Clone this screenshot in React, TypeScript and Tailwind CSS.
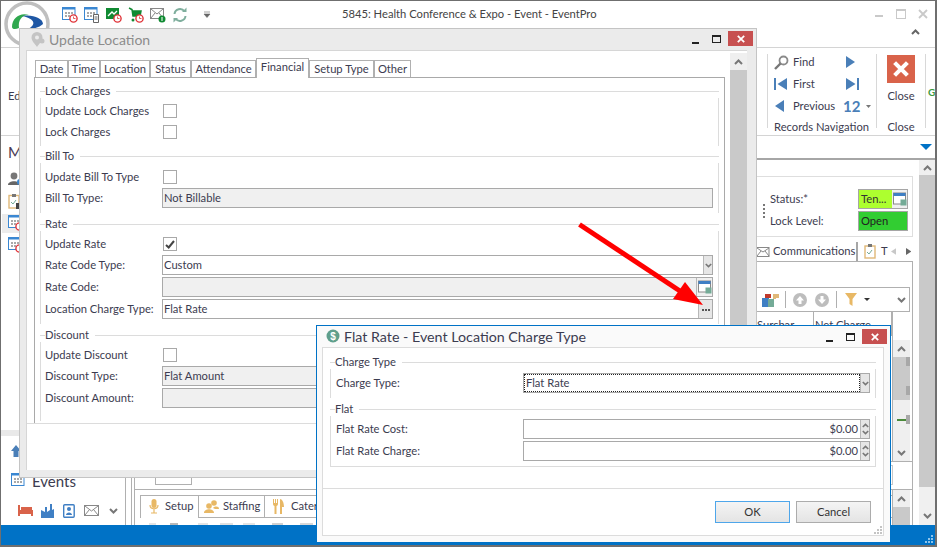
import React from "react";

const Chev = ({ up = false, c = "#777", w = 9, h = 6, sw = 2 }: { up?: boolean; c?: string; w?: number; h?: number; sw?: number }) => (
  <svg width={w} height={h} viewBox="0 0 9 6" className="shrink-0">
    <path d={up ? "M1 5L4.5 1.5L8 5" : "M1 1L4.5 4.5L8 1"} fill="none" stroke={c} strokeWidth={sw} />
  </svg>
);

const XIcon = ({ s = 9, sw = 2.4, c = "#fff" }: { s?: number; sw?: number; c?: string }) => (
  <svg width={s} height={s} viewBox="0 0 10 10" className="shrink-0">
    <path d="M1 1L9 9M9 1L1 9" stroke={c} strokeWidth={sw} />
  </svg>
);

const Clock = ({ x, y }: { x: number; y: number }) => (
  <g>
    <circle cx={x} cy={y} r="3.6" fill="#fff" stroke="#e0353a" strokeWidth="1.4" />
    <path d={`M${x} ${y - 2}V${y}H${x + 2}`} stroke="#e0353a" strokeWidth="0.8" fill="none" />
  </g>
);

const CalIcon = ({ clock = true, doc = false }: { clock?: boolean; doc?: boolean }) => (
  <svg width="16" height="16" viewBox="0 0 16 16" className="shrink-0">
    <rect x="0.5" y="0.5" width="12.5" height="12" fill="#fff" stroke="#3a87d2" />
    <rect x="0.5" y="0.5" width="12.5" height="2" fill="#3a87d2" />
    <path d="M3 5h2v2H3zM6 5h2v2H6zM9 5h2v2H9zM3 8h2v2H3zM6 8h2v2H6zM9 8h2v2H9z" fill="#a9a9a9" />
    {clock && <Clock x={11.5} y={11.5} />}
    {doc && <path d="M9.5 7.5h5v8h-5z M10.5 10h3M10.5 12h3" fill="#fff" stroke="#555" strokeWidth="0.9" />}
  </svg>
);

const QuickIcons = () => (
  <div className="flex items-start gap-[6px] ml-[11px] mt-[6px]">
    <CalIcon />
    <CalIcon clock={false} doc />
    <svg width="16" height="16" viewBox="0 0 16 16" className="shrink-0">
      <rect x="0" y="1" width="13" height="11" fill="#108a32" />
      <path d="M2 9L6 5L8 7L11 4" stroke="#fff" strokeWidth="1.3" fill="none" />
      <Clock x={11.5} y={11.5} />
    </svg>
    <svg width="16" height="16" viewBox="0 0 16 16" className="shrink-0">
      <path d="M1 1L4 2.5L5 9H12L13 4H4.5" stroke="#108a32" strokeWidth="1.5" fill="#108a32" />
      <circle cx="5" cy="13" r="1.5" fill="#108a32" />
      <Clock x={11.5} y={11.5} />
    </svg>
    <svg width="16" height="16" viewBox="0 0 16 16" className="shrink-0">
      <rect x="0.5" y="1.5" width="13" height="10" fill="#fff" stroke="#888" />
      <path d="M1 2L7 7L13 2M1 11L5 6M13 11L9 6" stroke="#888" fill="none" />
      <circle cx="12" cy="12" r="3.5" fill="#108a32" />
      <rect x="11.5" y="10" width="1" height="4" fill="#fff" />
    </svg>
    <svg width="16" height="16" viewBox="0 0 16 16" className="shrink-0">
      <path d="M2.5 7A5.5 5.5 0 0 1 12.5 4.5M13.5 9A5.5 5.5 0 0 1 3.5 11.5" stroke="#7fae9d" strokeWidth="2" fill="none" />
      <path d="M10 5H14.5V0.5zM6 11H1.5V15.5z" fill="#7fae9d" />
    </svg>
    <svg width="8" height="8" viewBox="0 0 8 8" className="ml-[9px] mt-[4px] shrink-0">
      <path d="M1 1H7M1 3H7L4 6.5Z" fill="#666" stroke="#666" strokeWidth="0.6" />
    </svg>
  </div>
);

const Logo = () => (
  <svg width="47" height="46" viewBox="0 0 47 46" className="ml-[3px] shrink-0">
    <circle cx="23" cy="23" r="21" fill="#fff" stroke="#bfbfbf" strokeWidth="3.5" />
    <path d="M8 26C8 16 17 11 25 14C17 14 14 20 15 27C11 29 8 28 8 26Z" fill="#2fa84f" />
    <path d="M18 15C28 13 39 17 39 23C35 27 28 28 24 28C32 24 32 18 18 15Z" fill="#1f57a4" />
  </svg>
);

const TriR = ({ c = "#4a7fb8", s = 12 }: { c?: string; s?: number }) => (
  <svg width={s * 0.75} height={s} viewBox="0 0 9 12" className="shrink-0"><path d="M0 0L9 6L0 12Z" fill={c} /></svg>
);
const TriL = ({ c = "#4a7fb8", s = 12 }: { c?: string; s?: number }) => (
  <svg width={s * 0.75} height={s} viewBox="0 0 9 12" className="shrink-0"><path d="M9 0L0 6L9 12Z" fill={c} /></svg>
);

const Pick = () => (
  <svg width="14" height="14" viewBox="0 0 14 14">
    <rect x="0.5" y="1" width="12" height="11" fill="#fff" stroke="#888" />
    <rect x="0.5" y="1" width="12" height="3" fill="#3f7fc4" />
    <rect x="7.5" y="7.5" width="6" height="6" fill="#74ab97" />
  </svg>
);

const Ribbon = () => (
  <div className="h-[88px] border-b border-[#d4d4d4] flex shrink-0">
    <div className="pl-[7px] pt-[40px] text-[#3c3c50]">Ed</div>
    <div className="ml-auto flex">
      <div className="mt-[6px] h-[74px] border-l border-[#d8d8d8]" />
      <div className="w-[108px] pl-[6px] pt-[3px] flex flex-col">
        <div className="grid grid-cols-[19px_50px_1fr] auto-rows-[22px] items-center">
          <svg width="15" height="15" viewBox="0 0 15 15">
            <circle cx="9.5" cy="5.5" r="4" fill="none" stroke="#8a8a8a" strokeWidth="1.8" />
            <path d="M6.5 8.5L1 14" stroke="#777" strokeWidth="2.4" />
          </svg>
          <span>Find</span>
          <div className="pl-[3px]"><TriR /></div>
          <svg width="13" height="12" viewBox="0 0 13 12"><rect x="0" y="0" width="2" height="12" fill="#4a7fb8" /><path d="M13 0L3.5 6L13 12Z" fill="#4a7fb8" /></svg>
          <span>First</span>
          <svg width="13" height="12" viewBox="0 0 13 12" className="ml-[3px]"><rect x="11" y="0" width="2" height="12" fill="#4a7fb8" /><path d="M0 0L9.5 6L0 12Z" fill="#4a7fb8" /></svg>
          <div className="pl-[1px]"><TriL /></div>
          <span>Previous</span>
          <div className="flex items-center gap-[6px]">
            <span className="text-[15px] font-bold text-[#4a7fb8]">12</span>
            <svg width="5" height="3" viewBox="0 0 5 3"><path d="M0 0H5L2.5 3Z" fill="#777" /></svg>
          </div>
        </div>
        <div className="mt-[2px] h-[16px] leading-[16px] whitespace-nowrap">Records Navigation</div>
      </div>
      <div className="mt-[6px] h-[74px] border-l border-[#d8d8d8]" />
      <div className="w-[48px] pt-[7px] flex flex-col items-center">
        <div className="size-[28px] bg-[#d9634a] flex items-center justify-center"><XIcon s={16} sw={2.6} /></div>
        <div className="mt-[6px] leading-[14px]">Close</div>
        <div className="mt-[17px] leading-[14px]">Close</div>
      </div>
      <div className="mt-[6px] h-[74px] border-l border-[#d8d8d8]" />
      <div className="w-[9px] overflow-hidden pl-[2px] pt-[37px] text-[#3d9a3d] font-bold text-[10px]">G</div>
    </div>
  </div>
);

const LeftNav = () => (
  <div className="w-[125px] shrink-0 border-r border-[#b0b0b0] flex flex-col">
    <div className="h-[32px] pl-[7px] flex items-center text-[15px] text-[#4a3a55]">My</div>
    <div className="pl-[7px] h-[22px] flex items-center">
      <svg width="14" height="14" viewBox="0 0 14 14"><circle cx="6" cy="4" r="3.4" fill="#777" /><path d="M0 13C0 8 12 8 12 13Z" fill="#666" /><circle cx="12" cy="10" r="3" fill="#3a87d2" /></svg>
    </div>
    <div className="pl-[7px] h-[22px] flex items-center">
      <svg width="14" height="15" viewBox="0 0 14 15"><rect x="1" y="1.5" width="10" height="12.5" fill="#fff" stroke="#e0b878" strokeWidth="1.4" /><rect x="4" y="0" width="4" height="3" fill="#777" /><path d="M3 8l2 2 3-4" stroke="#74ab97" fill="none" /><rect x="8" y="9" width="6" height="6" fill="#444" /></svg>
    </div>
    <div className="h-[22px] flex items-center">
      <div className="ml-[1px] pl-[6px] w-[18px] h-[19px] bg-[#ececec] flex items-center"><CalIcon /></div>
    </div>
    <div className="pl-[7px] h-[22px] flex items-center"><CalIcon /></div>
    <div className="mt-auto h-[6px] bg-[#e9e9e9]" />
    <div className="h-[30px] pl-[10px] flex items-center">
      <svg width="10" height="12" viewBox="0 0 10 12"><path d="M5 0L10 6H7.5V12H2.5V6H0Z" fill="#4a7fb8" /></svg>
    </div>
    <div className="h-[30px] pl-[10px] flex items-center gap-[5px] text-[15px] text-[#3c3c50]">
      <CalIcon clock={false} />
      <span>Events</span>
    </div>
    <div className="h-[29px] pl-[17px] flex items-center">
      <svg width="15" height="11" viewBox="0 0 15 11" className="mr-[8px]"><path d="M0 0H2V5H15V11H13V9H2V11H0Z" fill="#d9634a" /><rect x="3" y="2" width="11" height="3" fill="#d9634a" /></svg>
      <svg width="13" height="14" viewBox="0 0 13 14" className="mr-[9px]"><path d="M0 14V6L4 8V3H6V8L9 6V0H11V6L13 5V14Z" fill="#3f7fc4" /></svg>
      <svg width="13" height="14" viewBox="0 0 13 14" className="mr-[8px]"><rect x="0.7" y="0.7" width="10.5" height="12.5" rx="1" fill="#fff" stroke="#3f7fc4" strokeWidth="1.4" /><circle cx="6" cy="5" r="2" fill="#3f7fc4" /><path d="M3 11C3 7.5 9 7.5 9 11Z" fill="#3f7fc4" /></svg>
      <svg width="15" height="11" viewBox="0 0 15 11" className="mr-[10px]"><rect x="0.5" y="0.5" width="14" height="10" fill="#fff" stroke="#888" /><path d="M1 1L7.5 6L14 1M1 10L5.5 4.5M14 10L9.5 4.5" stroke="#888" fill="none" /></svg>
      <Chev />
    </div>
  </div>
);

const Tool = ({ w, c = "#d8d8d8", ml = 0 }: { w: number; c?: string; ml?: number }) => (
  <div style={{ width: w, marginLeft: ml, background: c }} className="h-[3px] shrink-0" />
);

const MainBackdrop = () => (
  <div className="flex-1 min-w-0 flex flex-col">
    <div className="h-[22px] flex justify-end items-center pr-[2px] shrink-0">
      <svg width="12" height="6" viewBox="0 0 12 6" className="mr-[1px]"><path d="M0 0H12L6 6Z" fill="#0072c6" /></svg>
    </div>
    <div className="h-[2px] bg-[#a6a6a6] shrink-0" />
    <div className="flex-1 min-h-0 flex">
      <div className="flex-1 min-w-0 ml-[5px] border-l border-[#b0b0b0] pl-[2px] flex flex-col">
        <div className="self-end mr-[6px] mt-[16px] w-[156px] h-[61px] border-y border-r border-[#dedede] pt-[12px] pl-[13px] shrink-0 relative">
          <div className="absolute left-[6px] top-[27px] flex flex-col gap-[2px]">
            {[0, 1, 2, 3].map((i) => <div key={i} className="size-[2px] bg-[#777]" />)}
          </div>
          <div className="flex h-[20px] items-center">
            <span className="w-[88px]">Status:*</span>
            <div className="w-[50px] h-[20px] border border-[#a6a6a6] flex">
              <div className="w-[33px] bg-[#adff2f] px-[2px] leading-[17px] text-[#333] whitespace-nowrap overflow-hidden">Ten...</div>
              <div className="flex-1 bg-[#f0f0f0] flex items-center justify-center"><Pick /></div>
            </div>
          </div>
          <div className="flex h-[20px] mt-[2px] items-center">
            <span className="w-[88px]">Lock Level:</span>
            <div className="w-[50px] h-[20px] border border-[#a6a6a6] bg-[#32cd32] px-[2px] leading-[17px] text-[#222]">Open</div>
          </div>
        </div>
        <div className="self-end mr-[6px] mt-[5px] w-[156px] h-[19px] flex items-center shrink-0">
          <svg width="13" height="10" viewBox="0 0 13 10" className="shrink-0"><rect x="-1" y="0.5" width="13" height="9" fill="#fff" stroke="#888" /><path d="M0 1L6 5L12 1M0 9L4 4M12 9L8 4" stroke="#888" fill="none" /></svg>
          <span className="ml-[3px] whitespace-nowrap w-[83px]">Communications</span>
          <div className="h-[19px] border-l-2 border-[#a6a6a6] shrink-0" />
          <svg width="13" height="15" viewBox="0 0 13 15" className="ml-[6px] shrink-0"><rect x="1" y="2" width="10" height="12" fill="#fff" stroke="#e0b878" strokeWidth="1.4" /><rect x="4" y="0" width="4" height="3" fill="#777" /><path d="M3 8l2 2 3-4" stroke="#74ab97" fill="none" /></svg>
          <span className="ml-[4px]">T</span>
          <div className="ml-[3px]"><TriL c="#c8c8c8" s={7} /></div>
          <div className="ml-[10px]"><TriR c="#666" s={7} /></div>
        </div>
        <div className="flex-1 min-h-0 mr-[6px] border-t border-x border-[#b0b0b0] flex flex-col">
          <div className="h-[25px] shrink-0" />
          <div className="h-[25px] mr-[2px] border border-[#b0b0b0] flex items-center justify-end shrink-0 pr-[3px]">
            <div className="h-[17px] border-l border-[#b0b0b0]" />
            <svg width="17" height="14" viewBox="0 0 17 14" className="ml-[6px]"><rect x="0" y="5" width="7" height="9" fill="#3f7fc4" /><rect x="6" y="6" width="6" height="8" fill="#74ab97" /><rect x="3" y="1" width="6" height="4" fill="#c0392b" /><path d="M11 1H17V5H14V6H11Z" fill="#e0b878" /></svg>
            <div className="h-[17px] border-l border-[#b0b0b0] ml-[6px]" />
            <svg width="14" height="14" viewBox="0 0 14 14" className="ml-[7px]"><circle cx="7" cy="7" r="7" fill="#bdbdbd" /><path d="M7 3L11 7.5H8.5V11H5.5V7.5H3Z" fill="#fff" /></svg>
            <svg width="14" height="14" viewBox="0 0 14 14" className="ml-[8px]"><circle cx="7" cy="7" r="7" fill="#bdbdbd" /><path d="M7 11L11 6.5H8.5V3H5.5V6.5H3Z" fill="#fff" /></svg>
            <div className="h-[17px] border-l border-[#b0b0b0] ml-[7px]" />
            <svg width="12" height="13" viewBox="0 0 12 13" className="ml-[8px]"><path d="M0 0H12L7.5 6V13L4.5 11V6Z" fill="#e8b865" /></svg>
            <svg width="6" height="3" viewBox="0 0 6 3" className="ml-[7px]"><path d="M0 0H6L3 3Z" fill="#333" /></svg>
            <div className="ml-[27px]"><Chev /></div>
          </div>
          <div className="h-[149px] shrink-0 flex mr-[2px]">
            <div className="flex-1 min-w-0 flex justify-end">
              <div className="w-[58px] h-[24px] border-r border-[#b0b0b0] pl-[1px] pt-[6px] leading-[14px] whitespace-nowrap">Surchar</div>
              <div className="w-[78px] h-[24px] border-r border-[#b0b0b0] pl-[1px] pt-[6px] leading-[14px] whitespace-nowrap">Net Charge</div>
            </div>
            <div className="w-[18px] shrink-0 flex flex-col border-l border-[#b0b0b0]">
              <div className="h-[28px] bg-white" />
              <div className="h-[17px] bg-[#efefef] flex items-center justify-center"><Chev up /></div>
              <div className="h-[43px] bg-[#c9c9c9] flex flex-col items-end">
                <div className="w-[4px] h-[9px] bg-[#a8a8a8]" />
                <div className="w-[4px] h-[9px] bg-[#a8a8a8] mt-[20px]" />
              </div>
              <div className="flex-1 bg-[#efefef] flex flex-col">
                <div className="mt-[15px] flex items-center justify-end">
                  <div className="w-[9px] h-[1px] border-t-2 border-[#4a8a3a]" />
                  <div className="w-[4px] h-[9px] bg-[#a8a8a8]" />
                </div>
                <div className="mt-auto mb-[5px] flex justify-center"><Chev /></div>
              </div>
            </div>
          </div>
          <div className="h-[28px] shrink-0 border-t border-[#b0b0b0] flex">
            <div className="ml-[20px] mt-[3px] w-[37px] h-[20px] border border-[#b0b0b0]" />
            <div className="ml-auto mr-[19px] mt-[3px] w-[40px] h-[20px] border border-[#c8c8c8]" />
          </div>
          <div className="flex-1 min-h-0 border-t border-[#b0b0b0] flex overflow-hidden">
            <div className="flex-1 min-w-0 pl-[5px] pt-[5px] flex flex-col">
              <div className="flex h-[22px] shrink-0">
                <div className="w-[59px] h-[23px] border-t border-x border-[#b0b0b0] bg-white flex items-center pl-[8px] gap-[6px] pb-[2px] z-10">
                  <svg width="10" height="15" viewBox="0 0 10 15"><rect x="2.5" y="0" width="5" height="9" rx="2.5" fill="#e8b865" /><path d="M1 6C1 11 9 11 9 6M5 10V14M2 14H8" stroke="#e8b865" strokeWidth="1.2" fill="none" /></svg>
                  <span>Setup</span>
                </div>
                <div className="w-[66px] border-t border-r border-[#b0b0b0] flex items-center pl-[5px] gap-[4px]">
                  <svg width="15" height="13" viewBox="0 0 15 13"><circle cx="5" cy="6" r="2.8" fill="#e8b865" /><circle cx="10" cy="3" r="2.8" fill="#e8b865" /><path d="M0 13C0 8 10 8 10 13ZM9 8C11 6 15 6 15 9H11Z" fill="#e8b865" /></svg>
                  <span>Staffing</span>
                </div>
                <div className="flex-1 border-t border-[#b0b0b0] flex items-center pl-[8px] gap-[7px]">
                  <svg width="11" height="15" viewBox="0 0 11 15"><path d="M0 0V5C0 6 1 7 1.5 7V15H3.5V7C4 7 5 6 5 5V0H4V4H3V0H2V4H1V0ZM7 15V0C9 0 11 3 11 8H9V15Z" fill="#e8b865" /></svg>
                  <span>Catering</span>
                </div>
              </div>
              <div className="border-t border-[#b0b0b0] pt-[5px] flex">
                <Tool w={7} c="#e4e4e4" ml={9} />
                <Tool w={8} c="#b8b8b8" ml={14} />
                <Tool w={10} c="#e4e4e4" ml={20} />
                <Tool w={13} c="#e0e0e0" ml={12} />
                <Tool w={12} c="#e4e4e4" ml={10} />
                <Tool w={11} c="#d0d0d0" ml={17} />
                <Tool w={13} c="#d8d8d8" ml={17} />
              </div>
            </div>
            <div className="w-[18px] mr-[2px] shrink-0 flex flex-col border-l border-[#b0b0b0]">
              <div className="h-[17px] bg-[#efefef] flex items-center justify-center"><Chev up /></div>
              <div className="flex-1 bg-[#c9c9c9]" />
            </div>
          </div>
        </div>
      </div>
      <div className="w-[16px] shrink-0 flex flex-col">
        <div className="h-[15px] bg-[#efefef] flex items-center justify-center"><Chev up /></div>
        <div className="flex-1 bg-[#c9c9c9]" />
        <div className="h-[38px] bg-[#f0f0f0] flex items-end justify-center pb-[6px]"><Chev /></div>
      </div>
    </div>
  </div>
);

const Legend = ({ t }: { t: string }) => (
  <div className="h-[14px] flex items-center">
    <div className="w-[5px] border-t border-[#dcdcdc]" />
    <span className="leading-[14px] whitespace-nowrap">{t}</span>
    <div className="flex-1 ml-[6px] border-t border-[#dcdcdc]" />
  </div>
);

const Check = ({ on = false }: { on?: boolean }) => (
  <div className="ml-[1px] size-[14px] border border-[#a9a9a9] bg-white flex items-center justify-center">
    {on && (
      <svg width="10" height="9" viewBox="0 0 10 9"><path d="M1 5L3.7 7.5L9 1" stroke="#444" strokeWidth="2" fill="none" /></svg>
    )}
  </div>
);

const Input = ({ v = "", gray = false, children }: { v?: string; gray?: boolean; children?: React.ReactNode }) => (
  <div className={`w-[551px] h-[20px] border border-[#a9a9a9] flex items-center ${gray ? "bg-[#f0f0f0]" : "bg-white"}`}>
    <span className="flex-1 pl-[1px] whitespace-nowrap text-[#3c3c50]">{v}</span>
    {children}
  </div>
);

const Row = ({ label, mt = "", children }: { label: string; mt?: string; children: React.ReactNode }) => (
  <div className={`flex h-[20px] items-center ${mt}`}>
    <span className="w-[117px] shrink-0 whitespace-nowrap">{label}</span>
    {children}
  </div>
);

const Tab = ({ t, w, active = false }: { t: string; w: string; active?: boolean }) => (
  <div className={`${w} ${active ? "h-[20px] -mt-[2px] bg-white z-10 -mb-[1px] pb-[2px]" : "h-[17px]"} border-t border-x border-[#b0b0b0] flex items-center justify-center whitespace-nowrap text-[#3c3c50]`}>
    {t}
  </div>
);

const WinBtns = ({ ml = "" }: { ml?: string }) => (
  <div className={`flex items-start ${ml}`}>
    <div className="w-[7px] h-[2px] bg-[#222] mt-[11px]" />
    <div className="ml-[13px] mt-[4px] w-[9px] h-[8px] border border-[#222] border-t-2" />
    <div className="ml-[7px] w-[25px] h-[15px] bg-[#c75050] flex items-center justify-center"><XIcon s={8} sw={2.2} /></div>
  </div>
);

const UpdateDialog = () => (
  <div className="absolute left-[18px] top-[27px] w-[738px] h-[450px] bg-[#ebebeb] border border-[#c4c4c4] flex flex-col text-[#3c3c50] z-10">
    <div className="h-[21px] shrink-0 flex items-start pl-[11px] pr-[3px]">
      <svg width="14" height="15" viewBox="0 0 14 15" className="mt-[3px]"><path d="M6 0A5.5 5.5 0 0 1 11.5 5.5C11.5 9 8 12 6 15C4 12 .5 9 .5 5.5A5.5 5.5 0 0 1 6 0Z" fill="#c4c4c4" /><circle cx="6" cy="5.5" r="2" fill="#ebebeb" /><circle cx="11" cy="9" r="2.5" fill="#c4c4c4" /></svg>
      <span className="ml-[4px] text-[14px] leading-[21px] text-[#8c8c8c]">Update Location</span>
      <WinBtns ml="ml-auto mt-[2px]" />
    </div>
    <div className="flex-1 min-h-0 ml-[6px] mr-[9px] mb-[7px] bg-white border-t border-l border-[#d6d6d6] flex">
      <div className="flex-1 min-w-0 flex flex-col">
        <div className="h-[372px] shrink-0 pl-[7px] pr-[5px] pt-[9px] flex flex-col">
          <div className="flex h-[17px] pl-[1px] shrink-0 items-start">
            <Tab t="Date" w="w-[33px]" />
            <Tab t="Time" w="w-[32px]" />
            <Tab t="Location" w="w-[50px]" />
            <Tab t="Status" w="w-[41px]" />
            <Tab t="Attendance" w="w-[65px]" />
            <Tab t="Financial" w="w-[53px]" active />
            <Tab t="Setup Type" w="w-[65px]" />
            <Tab t="Other" w="w-[37px]" />
          </div>
          <div className="flex-1 min-h-0 border-t border-x border-[#a9a9a9] pt-[6px] px-[5px]">
            <Legend t="Lock Charges" />
            <div className="border-x border-[#dcdcdc] pl-[4px] pt-[3px] pb-[4px]">
              <Row label="Update Lock Charges"><Check /></Row>
              <Row label="Lock Charges" mt="mt-[1px]"><Check /></Row>
            </div>
            <div className="mt-[3px]"><Legend t="Bill To" /></div>
            <div className="border-x border-[#dcdcdc] pl-[4px] pt-[4px] pb-[5px]">
              <Row label="Update Bill To Type"><Check /></Row>
              <Row label="Bill To Type:" mt="mt-[1px]"><Input v="Not Billable" gray /></Row>
            </div>
            <div className="mt-[4px]"><Legend t="Rate" /></div>
            <div className="border-x border-[#dcdcdc] pl-[4px] pt-[3px] pb-[5px]">
              <Row label="Update Rate"><Check on /></Row>
              <Row label="Rate Code Type:" mt="mt-[1px]">
                <Input v="Custom">
                  <div className="w-[9px] h-full bg-[#e6e6e6] border-l border-[#b8b8b8] flex items-center justify-center"><Chev w={7} h={5} /></div>
                </Input>
              </Row>
              <Row label="Rate Code:" mt="mt-[2px]">
                <Input gray>
                  <div className="w-[16px] h-full bg-[#f0f0f0] border-l border-[#b8b8b8] flex items-center justify-center"><Pick /></div>
                </Input>
              </Row>
              <Row label="Location Charge Type:" mt="mt-[2px]">
                <Input v="Flat Rate">
                  <div className="w-[14px] h-full bg-[#e6e6e6] border-l border-[#b8b8b8] flex items-center justify-center gap-[1px] pt-[1px]">
                    <div className="size-[2px] bg-[#555]" /><div className="size-[2px] bg-[#555]" /><div className="size-[2px] bg-[#555]" />
                  </div>
                </Input>
              </Row>
            </div>
            <div className="mt-[4px]"><Legend t="Discount" /></div>
            <div className="border-x border-[#dcdcdc] pl-[4px] pt-[3px] pb-[13px]">
              <Row label="Update Discount"><Check /></Row>
              <Row label="Discount Type:" mt="mt-[1px]"><Input v="Flat Amount" gray /></Row>
              <Row label="Discount Amount:" mt="mt-[2px]"><Input gray /></Row>
            </div>
          </div>
        </div>
        <div className="flex-1 border-t border-[#dcdcdc]" />
      </div>
      <div className="w-[17px] shrink-0 flex flex-col mt-[2px]">
        <div className="h-[17px] bg-[#efefef] flex items-center justify-center"><Chev up /></div>
        <div className="flex-1 bg-[#c9c9c9]" />
      </div>
    </div>
  </div>
);

const Spin = () => (
  <div className="w-[9px] h-full bg-[#e6e6e6] border-l border-[#b8b8b8] flex flex-col items-center justify-center gap-[2px]">
    <Chev up w={7} h={5} />
    <Chev w={7} h={5} />
  </div>
);

const Money = ({ label, mt = "" }: { label: string; mt?: string }) => (
  <div className={`flex h-[20px] items-center ${mt}`}>
    <span className="w-[187px] shrink-0">{label}</span>
    <div className="w-[347px] h-[20px] border border-[#a9a9a9] bg-white flex items-center">
      <span className="flex-1 text-right pr-[2px] text-[#3c3c50]">$0.00</span>
      <Spin />
    </div>
  </div>
);

const RateDialog = () => (
  <div className="absolute left-[315px] top-[324px] w-[575px] h-[218px] bg-[#fafafa] border border-[#0072c6] flex flex-col text-[#3c3c50] z-30">
    <div className="h-[21px] shrink-0 flex items-start pl-[9px] pr-[3px]">
      <svg width="14" height="14" viewBox="0 0 14 14" className="mt-[3px]"><circle cx="7" cy="7" r="6.5" fill="#5f9f8c" /><text x="7" y="10.5" textAnchor="middle" fontSize="10" fontWeight="700" fill="#fff" fontFamily="Liberation Sans">$</text></svg>
      <span className="ml-[4px] text-[14.25px] leading-[21px] text-[#3c3c50] whitespace-nowrap">Flat Rate - Event Location Charge Type</span>
      <WinBtns ml="ml-auto mt-[3px]" />
    </div>
    <div className="flex-1 min-h-0 ml-[5px] mr-[6px] mb-[6px] bg-white border border-[#dcdcdc] flex flex-col relative">
      <div className="px-[7px] pt-[7px]">
        <Legend t="Charge Type" />
        <div className="border-x border-[#dcdcdc] pl-[5px] pr-[5px] pt-[4px] pb-[5px]">
          <div className="flex h-[20px] items-center">
            <span className="w-[187px] shrink-0">Charge Type:</span>
            <div className="w-[347px] h-[20px] border border-[#a9a9a9] bg-white flex items-center">
              <div className="flex-1 h-full border border-dotted border-[#222] pl-[1px] leading-[16px] text-[#3c3c50]">Flat Rate</div>
              <div className="w-[9px] h-full bg-[#e6e6e6] border-l border-[#b8b8b8] flex items-center justify-center"><Chev w={7} h={5} /></div>
            </div>
          </div>
        </div>
        <div className="mt-[4px]"><Legend t="Flat" /></div>
        <div className="border-x border-b border-[#dcdcdc] pl-[5px] pr-[5px] pt-[3px] pb-[5px]">
          <Money label="Flat Rate Cost:" />
          <Money label="Flat Rate Charge:" mt="mt-[2px]" />
        </div>
      </div>
      <div className="mt-[21px] border-t border-[#dcdcdc] flex justify-end gap-[6px] pt-[12px] pr-[12px]">
        <div className="w-[75px] h-[22px] border border-[#4ea6ea] bg-linear-to-b from-[#f4f4f4] to-[#e4e4e4] flex items-center justify-center text-[#333]">OK</div>
        <div className="w-[75px] h-[22px] border border-[#acacac] bg-linear-to-b from-[#f4f4f4] to-[#e4e4e4] flex items-center justify-center text-[#333]">Cancel</div>
      </div>
      <Grip c="#c4c4c4" cls="absolute right-0 bottom-0" />
    </div>
  </div>
);

const Grip = ({ c, cls = "" }: { c: string; cls?: string }) => (
  <svg width="9" height="9" viewBox="0 0 9 9" className={cls}>
    <path d="M6 0h2v2H6zM3 3h2v2H3zM6 3h2v2H6zM0 6h2v2H0zM3 6h2v2H3zM6 6h2v2H6z" fill={c} />
  </svg>
);

const RedArrow = () => (
  <svg width="140" height="95" viewBox="0 0 140 95" className="absolute left-[573px] top-[217px] z-20 pointer-events-none">
    <path d="M5.5 6.5L112 77" stroke="#ff0000" strokeWidth="5" />
    <path d="M111 64L99 81L129 87Z" fill="#ff0000" />
  </svg>
);

export default function App() {
  return (
    <div className="relative w-[937px] h-[547px] overflow-hidden bg-white border-t border-l border-r-2 border-b-2 border-[#6f6f6f] font-['Lato',sans-serif] text-[11.2px] text-[#3c3c50] flex flex-col">
      <div className="h-[47px] shrink-0 border-b border-[#d4d4d4] flex items-start">
        <Logo />
        <QuickIcons />
        <span className="ml-[131px] mt-[5px] whitespace-nowrap text-[#444]">5845: Health Conference &amp; Expo - Event - EventPro</span>
        <div className="ml-auto flex flex-col items-end pr-[7px] pt-[8px]">
          <div className="flex items-start">
            <div className="w-[8px] h-[2px] bg-[#c9c9c9] mt-[6px]" />
            <div className="ml-[13px] w-[10px] h-[10px] border border-[#c9c9c9] border-t-2" />
            <div className="ml-[12px]"><XIcon s={10} sw={1.8} c="#c9c9c9" /></div>
          </div>
          <div className="mt-[10px] mr-[8px]"><Chev up c="#666" w={9} h={6} /></div>
        </div>
      </div>
      <Ribbon />
      <div className="flex-1 min-h-0 flex">
        <LeftNav />
        <MainBackdrop />
      </div>
      <div className="h-[20px] shrink-0 bg-[#0072c6] flex justify-end items-end pr-[1px] pb-[1px]">
        <Grip c="#8fc4ea" />
      </div>
      <UpdateDialog />
      <RedArrow />
      <RateDialog />
    </div>
  );
}
